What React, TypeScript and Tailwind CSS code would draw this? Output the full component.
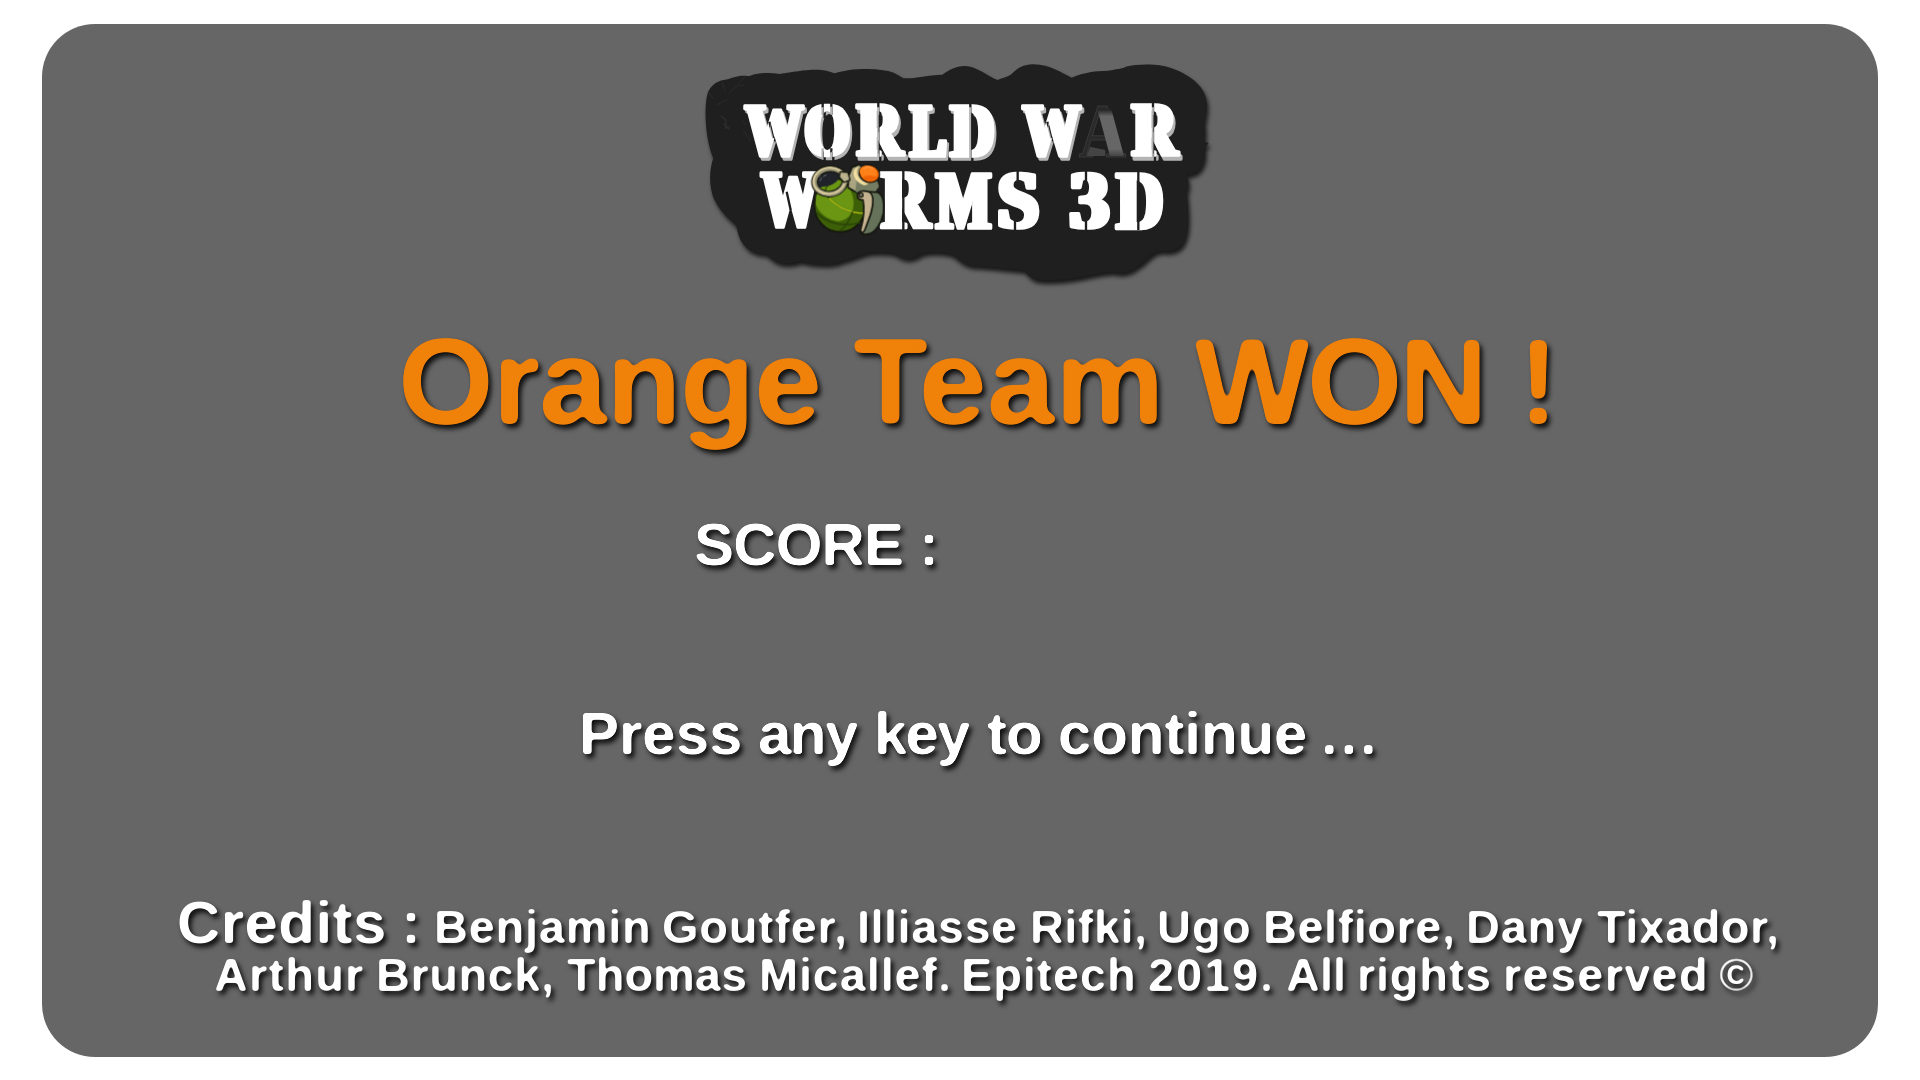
import React from "react";

type Ink = { left: number; right: number; top: number; bottom: number };
const canvas = document.createElement("canvas");

function measure(text: string, font: string): Ink {
  const ctx = canvas.getContext("2d")!;
  ctx.font = font;
  const m = ctx.measureText(text);
  return {
    left: -m.actualBoundingBoxLeft,
    right: m.actualBoundingBoxRight,
    top: m.actualBoundingBoxAscent,
    bottom: m.actualBoundingBoxDescent,
  };
}

type WordSpec = { t: string; from: number; to: number; size?: number };

/* A row of words, each tracked so that its visible width spans from..to. */
function Line({ words, size, className }: { words: WordSpec[]; size: number; className: string }) {
  let cursor = 42;
  return (
    <div className={`flex items-baseline whitespace-pre font-bold leading-none ${className}`}>
      {words.map((w) => {
        const px = w.size ?? size;
        const ink = measure(w.t, `bold ${px}px "Liberation Sans"`);
        const width = w.to - w.from;
        const spacing = w.t.length > 1 ? (width - (ink.right - ink.left)) / (w.t.length - 1) : 0;
        const gap = w.from - cursor;
        cursor = w.to;
        return (
          <span
            key={w.t}
            className="block shrink-0"
            style={{ fontSize: px, width, marginLeft: gap, textIndent: -ink.left, letterSpacing: spacing }}
          >
            {w.t}
          </span>
        );
      })}
    </div>
  );
}

type Glyph = { c: string; x1: number; x2: number };

const rowOne: Glyph[] = [
  { c: "W", x1: 159, x2: 345 },
  { c: "O", x1: 342, x2: 481 },
  { c: "R", x1: 495, x2: 648 },
  { c: "L", x1: 654, x2: 772 },
  { c: "D", x1: 776, x2: 914 },
  { c: "W", x1: 992, x2: 1177 },
  { c: "R", x1: 1320, x2: 1472 },
];
const rowTwo: Glyph[] = [
  { c: "W", x1: 208, x2: 392 },
  { c: "R", x1: 568, x2: 730 },
  { c: "M", x1: 733, x2: 908 },
  { c: "S", x1: 924, x2: 1047 },
  { c: "3", x1: 1138, x2: 1260 },
  { c: "D", x1: 1274, x2: 1420 },
];

type LetterProps = { g: Glyph; top: number; bottom: number; padX?: number; padY?: number };

function Letter({ g, top, bottom, padX = 10, padY = 4 }: LetterProps) {
  const ink = measure(g.c, 'bold 200px "Liberation Serif"');
  const sx = (g.x2 - g.x1 - padX * 2) / (ink.right - ink.left);
  const sy = (bottom - top - padY * 2) / (ink.top + ink.bottom);
  const tx = g.x1 + padX - ink.left * sx;
  const ty = bottom - padY - ink.bottom * sy;
  return (
    <text fontSize="200" transform={`translate(${tx} ${ty}) scale(${sx} ${sy})`}>
      {g.c}
    </text>
  );
}

function Grenade() {
  return (
    <g stroke="#15180f" strokeWidth="5" strokeLinejoin="round" strokeLinecap="round">
      <ellipse cx="450" cy="466" rx="77" ry="80" fill="#3d5f08" />
      <path d="M378 440C384 412 408 392 440 388C478 400 500 440 487 485C478 503 462 512 446 514C415 510 385 490 377 462Z" fill="#6a9614" stroke="none" />
      <path d="M438 388C400 410 398 428 418 446C450 478 490 492 524 492" fill="none" stroke="#294306" strokeWidth="4" />
      <path d="M418 446C445 474 478 490 524 490" fill="none" stroke="#b0bd16" strokeWidth="4" />
      <path d="M379 488C410 520 460 532 510 518M487 485C480 510 468 530 450 542" fill="none" stroke="#294306" strokeWidth="4" />
      <path d="M376 403C382 383 398 371 420 368C436 368 446 374 449 382C440 401 414 412 388 410Z" fill="#20242a" stroke="none" />
      <path d="M390 392C396 380 403 376 416 372" fill="none" stroke="#8d98a8" strokeWidth="2" strokeDasharray="9 8" />
      <path d="M476 377L486 352L508 344L563 390L567 410L555 426L525 424L510 433L474 413Z" fill="#aaa481" />
      <path d="M500 387L525 402L563 396L567 410L555 426L525 424L510 433L496 424Z" fill="#747c62" stroke="none" />
      <path d="M494 357L508 346C492 365 502 393 536 402L522 406C494 396 485 371 494 357Z" fill="#f3dfa0" stroke="none" />
      <ellipse cx="538" cy="371" rx="31" ry="26" transform="rotate(18 538 371)" fill="#ef6506" strokeWidth="4" />
      <path d="M509 368C506 348 530 341 550 352C561 360 563 372 560 380C543 375 525 373 519 383Z" fill="#ff8119" stroke="none" />
      <path d="M522 356C530 350 540 350 547 355" fill="none" stroke="#ff9b49" strokeWidth="4" />
      <g transform="rotate(-8 419 394)" fill="none">
        <ellipse cx="419" cy="394" rx="46" ry="38" strokeWidth="20" />
        <ellipse cx="419" cy="394" rx="46" ry="38" stroke="#9b9677" strokeWidth="14" />
        <ellipse cx="418" cy="392" rx="47" ry="39" stroke="#e0d2a2" strokeWidth="5" />
      </g>
      <path d="M450 365L474 367L480 390L462 397L448 382Z" fill="#b8b18c" strokeWidth="4" />
      <path d="M538 425L563 427C579 434 583 460 580 490C574 520 556 547 536 552C520 556 511 551 512 542C525 510 533 462 538 425Z" fill="#65735a" />
      <path d="M502 434C506 422 521 420 540 427C554 440 550 466 540 498L525 538C520 551 510 550 512 538C520 510 524 475 519 450C508 450 500 444 502 434Z" fill="#c5b390" />
      <circle cx="513" cy="435" r="6" fill="#858064" strokeWidth="4" />
    </g>
  );
}

function Logo() {
  return (
    <svg
      className="block h-[250px] w-[540px]"
      viewBox="0 0 1620 750"
      fontFamily='"Liberation Serif", serif'
      fontWeight="bold"
      role="img"
      aria-label="World War Worms 3D"
    >
      <defs>
        <filter id="plate-shadow" x="-5%" y="-5%" width="110%" height="115%" colorInterpolationFilters="sRGB">
          <feDropShadow dx="6" dy="12" stdDeviation="6" floodColor="#111" floodOpacity="0.9" />
        </filter>
        <filter id="widen" x="-5%" y="-5%" width="110%" height="110%" colorInterpolationFilters="sRGB">
          <feMorphology operator="dilate" radius="6 0.01" />
        </filter>
        <linearGradient id="fade" x1="0" x2="0" y1="0" y2="1">
          <stop offset="0" stopColor="#222" />
          <stop offset="0.15" stopColor="#666" />
          <stop offset="0.85" stopColor="#666" />
          <stop offset="1" stopColor="#444" />
        </linearGradient>
        <mask id="cuts" maskUnits="userSpaceOnUse" x="0" y="0" width="1620" height="750">
          <rect width="1620" height="750" fill="white" />
          <g stroke="black" strokeWidth="7" fill="none">
            <path d="M398 155V195M424 155V195M398 295V340M424 295V340M565 155V335M841 155V335M1389 155V335" />
            <path d="M238 215L250 265M1072 215L1084 265" />
            <path d="M290 425L302 480M640 360V540M983 360V402M975 500V545M1188 360V402M1188 500V545M1345 360V540" />
          </g>
        </mask>
        <g id="top-row" mask="url(#cuts)">
          <g strokeWidth="9" strokeLinejoin="round" filter="url(#widen)">
            {rowOne.map((g, i) => (
              <Letter key={i} g={g} top={164} bottom={321} />
            ))}
          </g>
        </g>
      </defs>
      <path
        filter="url(#plate-shadow)"
        fill="#1f1f1f"
        d="M54 126C65 105 80 94 101 90C118 88 130 81 148 78C160 76 170 79 181 77C199 69 230 66 268 72C310 66 340 59 378 59C402 59 418 64 435 70C480 53 560 54 597 64C618 70 628 78 640 85C680 86 710 75 757 74C776 60 795 49 825 48C860 49 895 80 923 90C938 82 950 82 962 74C982 56 995 44 1030 43C1082 44 1112 68 1145 83C1185 66 1215 63 1255 62C1277 57 1299 56 1307 50C1350 40 1416 42 1445 55C1500 74 1535 105 1546 138C1555 170 1547 195 1543 220C1547 240 1545 258 1543 274L1556 280L1544 292C1550 340 1528 376 1486 373C1500 389 1495 414 1490 425C1494 470 1498 520 1490 550C1484 584 1463 602 1438 603C1422 605 1409 600 1398 606C1380 613 1362 639 1340 650C1318 669 1290 671 1265 665C1225 668 1190 677 1150 685C1100 693 1040 693 1026 684C1011 675 1009 664 995 660C940 655 900 649 850 647C810 642 805 623 780 611C755 605 710 603 690 612C668 630 640 628 620 615C605 604 580 605 540 607C510 613 490 625 455 633C420 648 370 642 330 633C295 646 260 641 242 624C230 615 225 609 206 610C168 602 146 574 139 527C116 505 93 487 78 457C59 429 54 368 70 325C46 270 40 169 54 126Z"
      />
      <g fill="none" stroke="#2b2b2b" strokeWidth="3">
        <path d="M97 96L105 123M118 130L142 106L165 81M54 126L69 145M80 165L112 148M146 108L164 103M157 211L168 225M160 240L184 277" />
        <path d="M92 198L108 209L107 235L119 230M100 220L118 238" strokeWidth="5" />
      </g>
      <use href="#top-row" x="6" y="10" fill="#b4b4b4" stroke="#b4b4b4" />
      <g fill="#2a2a2a" stroke="#383838" strokeWidth="3">
        <Letter g={{ c: "A", x1: 1166, x2: 1308 }} top={164} bottom={322} padX={1} padY={1} />
      </g>
      <path d="M1222 178H1264L1302 318H1260Z" fill="url(#fade)" />
      <path d="M1190 318L1200 290L1246 300V318Z" fill="#444" />
      <use href="#top-row" fill="#fff" stroke="#fff" />
      <g mask="url(#cuts)">
        <g fill="#fff" stroke="#fff" strokeWidth="9" strokeLinejoin="round" filter="url(#widen)">
          {rowTwo.map((g, i) => (
            <Letter key={i} g={g} top={368} bottom={537} />
          ))}
        </g>
      </g>
      <Grenade />
    </svg>
  );
}

/* Filters that soften letter corners and cast the shadow behind them. */
function TextFilters() {
  const kinds = [
    { id: "round-lg", blur: 3.6, weight: 0.45 },
    { id: "round-md", blur: 1.8, weight: 0.4 },
    { id: "round-sm", blur: 1.4, weight: 0.4 },
  ];
  return (
    <svg className="absolute h-0 w-0" aria-hidden="true">
      {kinds.map((k) => (
        <filter key={k.id} id={k.id} x="-5%" y="-20%" width="110%" height="150%" colorInterpolationFilters="sRGB">
          <feGaussianBlur in="SourceGraphic" stdDeviation={k.blur} />
          <feComponentTransfer result="shape">
            <feFuncA type="linear" slope={k.blur * 3} intercept={-k.blur * 1.5 + k.weight} />
          </feComponentTransfer>
          <feDropShadow in="shape" dx={3} dy={4} stdDeviation={2.5} floodColor="#000" floodOpacity="0.85" />
        </filter>
      ))}
    </svg>
  );
}

export default function App() {
  return (
    <main className="h-[1080px] w-[1920px] overflow-hidden bg-white px-[42px] pt-6 font-['Liberation_Sans',sans-serif]">
      <TextFilters />
      <section className="flex h-[1033px] flex-col rounded-[53px] bg-[#666] text-white">
        <header className="ml-[648px] mt-[26px] h-[250px] shrink-0">
          <Logo />
        </header>
        <Line
          className="mt-[20px] h-[123px] shrink-0 text-[#f08109] [filter:url(#round-lg)]"
          size={123}
          words={[
            { t: "Orange", from: 403, to: 819 },
            { t: "Team", from: 854, to: 1157 },
            { t: "WON", from: 1194, to: 1480 },
            { t: "!", from: 1529, to: 1547 },
          ]}
        />
        <Line
          className="mt-[72px] h-[60px] shrink-0 [filter:url(#round-md)]"
          size={60}
          words={[
            { t: "SCORE", from: 695, to: 902 },
            { t: ":", from: 924, to: 934 },
          ]}
        />
        <Line
          className="mt-[129px] h-[60px] shrink-0 [filter:url(#round-md)]"
          size={60}
          words={[
            { t: "Press", from: 583, to: 740 },
            { t: "any", from: 759, to: 859 },
            { t: "key", from: 878, to: 971 },
            { t: "to", from: 987, to: 1041 },
            { t: "continue", from: 1060, to: 1306 },
            { t: "...", from: 1325, to: 1373 },
          ]}
        />
        <Line
          className="mt-[129px] h-[60px] shrink-0 [filter:url(#round-sm)]"
          size={47}
          words={[
            { t: "Credits", from: 179, to: 384, size: 60 },
            { t: ":", from: 406, to: 415, size: 60 },
            { t: "Benjamin", from: 437, to: 648 },
            { t: "Goutfer,", from: 663, to: 844 },
            { t: "Illiasse", from: 860, to: 1016 },
            { t: "Rifki,", from: 1033, to: 1144 },
            { t: "Ugo", from: 1159, to: 1249 },
            { t: "Belfiore,", from: 1266, to: 1452 },
            { t: "Dany", from: 1469, to: 1583 },
            { t: "Tixador,", from: 1597, to: 1776 },
          ]}
        />
        <Line
          className="-mt-[2px] h-[47px] shrink-0 [filter:url(#round-sm)]"
          size={47}
          words={[
            { t: "Arthur", from: 215, to: 363 },
            { t: "Brunck,", from: 379, to: 551 },
            { t: "Thomas", from: 567, to: 746 },
            { t: "Micallef.", from: 762, to: 948 },
            { t: "Epitech", from: 964, to: 1133 },
            { t: "2019.", from: 1149, to: 1270 },
            { t: "All", from: 1287, to: 1343 },
            { t: "rights", from: 1360, to: 1490 },
            { t: "reserved", from: 1506, to: 1705 },
            { t: "©", from: 1719, to: 1754 },
          ]}
        />
      </section>
    </main>
  );
}
